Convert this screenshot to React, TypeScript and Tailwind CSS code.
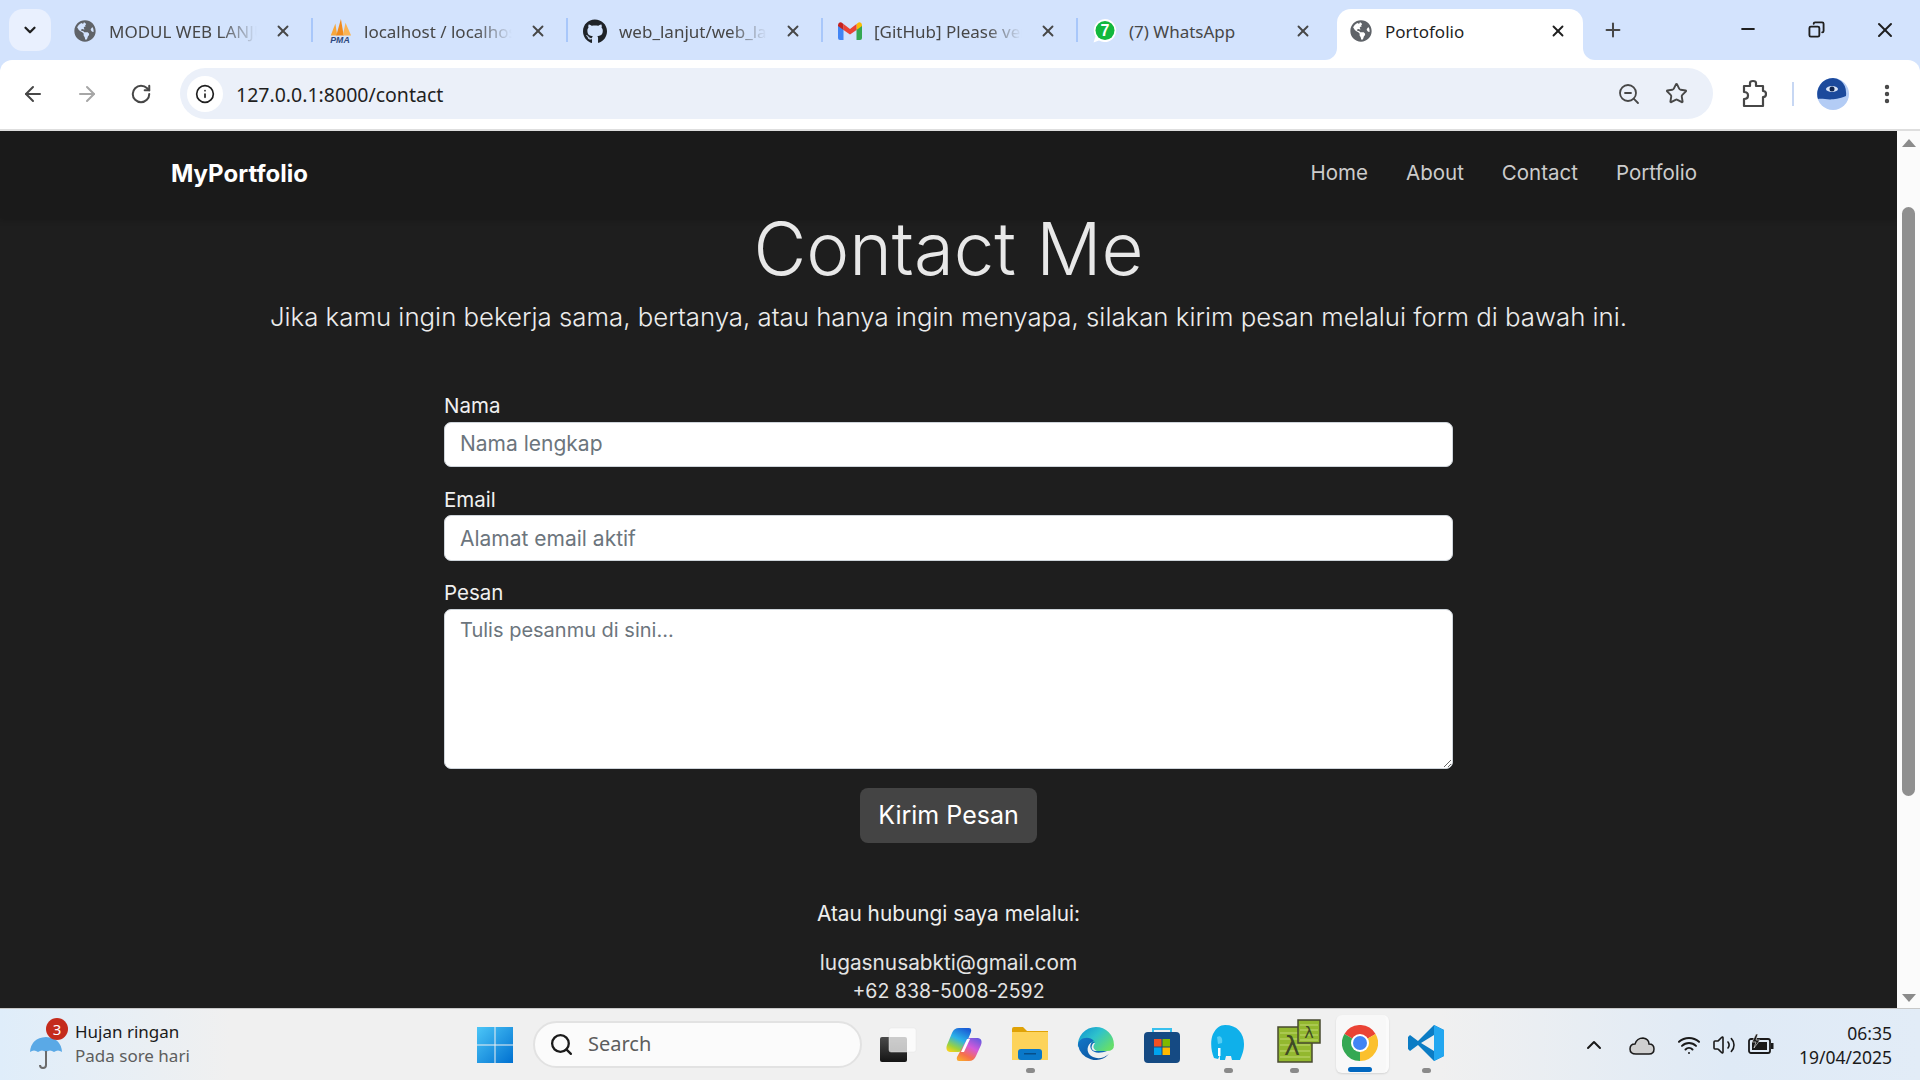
import { ArrowLeft, ArrowRight, ChevronDown, ChevronUp, Copy, Info, Minus, MoreVertical, Plus, RotateCw, Search, Star, Volume2, Wifi, X, ZoomOut } from "lucide-react";
import { FaGithub, FaGlobeAmericas } from "react-icons/fa";

const uiFont = "font-['Noto_Sans',sans-serif]";

function PmaIcon() {
    return (
        <svg width="26" height="26" viewBox="0 0 26 26">
            <path d="M3 18 L8 5 L10 18 Z" fill="#f7a73c" />
            <path d="M9 18 L14 0 L17 18 Z" fill="#f08a1d" />
            <path d="M16 18 L19 4 L25 18 Z" fill="#fbb454" />
            <text x="13" y="25.5" textAnchor="middle" fontSize="9.5" fontWeight="700" fontStyle="italic" fill="#2f4a80" fontFamily="Liberation Sans">PMA</text>
        </svg>
    );
}

function GmailIcon() {
    return (
        <svg width="24" height="18" viewBox="0 0 24 18">
            <path d="M0 3 L0 16 Q0 18 2 18 L5.5 18 L5.5 7 Z" fill="#4285f4" />
            <path d="M18.5 7 L18.5 18 L22 18 Q24 18 24 16 L24 3 Z" fill="#34a853" />
            <path d="M18.5 2 L18.5 8 L24 4 L24 3 Q23.5 -0.5 20.5 0.5 Z" fill="#fbbc04" />
            <path d="M5.5 8 L5.5 2 L12 7 L18.5 2 L18.5 8 L12 12.5 Z" fill="#ea4335" />
            <path d="M0 4 L0 3 Q0.5 -0.5 3.5 0.5 L5.5 2 L5.5 8 Z" fill="#c5221f" />
        </svg>
    );
}

function WhatsappIcon() {
    return (
        <svg width="24" height="26" viewBox="0 0 24 26">
            <path d="M12 1 A11.5 11.5 0 1 1 6 22.5 L0.5 24.5 L2.5 18.5 A11.5 11.5 0 0 1 12 1 Z" fill="#ffffff" />
            <circle cx="12" cy="12.5" r="9.5" fill="#12b83d" />
            <text x="12" y="18" textAnchor="middle" fontSize="16" fontWeight="700" fill="#ffffff" fontFamily="Liberation Sans">7</text>
        </svg>
    );
}

function Tab({ icon, title, active, fade, separator }: { icon: React.ReactNode; title: string; active?: boolean; fade?: boolean; separator?: boolean }) {
    return (
        <div className={`relative h-[51px] mt-[9px] flex items-center shrink-0 ${active ? "w-[246px] pl-[12px] bg-white rounded-t-[14px]" : separator ? "w-[255px] pl-[15px]" : "w-[259px] pl-[15px]"}`}>
            <span className="w-[24px] h-[26px] flex items-center justify-center shrink-0 mb-[7px]">{icon}</span>
            <span className={`ml-[12px] w-[148px] shrink-0 whitespace-nowrap overflow-hidden text-[17px] leading-[24px] mb-[5px] ${active ? "text-[#1f1f1f]" : "text-[#474747]"} ${fade ? "[mask-image:linear-gradient(to_right,black_75%,transparent)]" : ""}`}>{title}</span>
            <X size={18} strokeWidth={2.5} className={`shrink-0 mb-[7px] ${active ? "ml-[16px] text-[#1f1f1f]" : "ml-[17px] text-[#474747]"}`} />
            {separator && <span className="absolute right-0 top-[9px] w-[2px] h-[24px] bg-[#a8c7fa]"></span>}
            {active && (
                <>
                    <span className="absolute -left-[12px] bottom-0 w-[12px] h-[12px] bg-white"><span className="block w-full h-full bg-[#d3e3fd] rounded-br-[12px]"></span></span>
                    <span className="absolute -right-[12px] bottom-0 w-[12px] h-[12px] bg-white"><span className="block w-full h-full bg-[#d3e3fd] rounded-bl-[12px]"></span></span>
                </>
            )}
        </div>
    );
}

function TasksIcon() {
    return (
        <svg width="38" height="36" viewBox="0 0 38 36">
            <defs>
                <linearGradient id="tv" x1="0" y1="0" x2="0" y2="1"><stop offset="0" stopColor="#4a4a4a" /><stop offset="1" stopColor="#141414" /></linearGradient>
            </defs>
            <rect x="1" y="10" width="27" height="25" rx="2" fill="url(#tv)" />
            <rect x="10" y="1" width="27" height="24" rx="2" fill="#ffffff" fillOpacity="0.72" stroke="#e4e4e4" strokeWidth="0.5" />
        </svg>
    );
}

function CopilotIcon() {
    return (
        <svg width="36" height="36" viewBox="0 0 36 36">
            <defs>
                <linearGradient id="cp1" x1="0.7" y1="0" x2="0.2" y2="1"><stop offset="0" stopColor="#1b5fd6" /><stop offset="0.45" stopColor="#2bb3e8" /><stop offset="0.8" stopColor="#9ed23c" /><stop offset="1" stopColor="#f4d21f" /></linearGradient>
                <linearGradient id="cp2" x1="0.8" y1="0" x2="0.2" y2="1"><stop offset="0" stopColor="#6a5ae0" /><stop offset="0.4" stopColor="#d55ad8" /><stop offset="0.75" stopColor="#f66f4c" /><stop offset="1" stopColor="#f9a52e" /></linearGradient>
            </defs>
            <path d="M13 1 L23 1 Q26 1 25 5 L18 22 Q16 25 12 25 L4 25 Q-1 24 1 18 L6 6 Q8 1 13 1 Z" fill="url(#cp1)" />
            <path d="M20 14 Q21 11 25 11 L32 11 Q37 12 35 18 L30 29 Q28 34 23 34 L13 34 Q10 34 11 30 Z" fill="url(#cp2)" />
            <path d="M21 12 L24 12 L18 25 L15 25 Z" fill="#ffffff" />
        </svg>
    );
}

function ExplorerIcon() {
    return (
        <svg width="36" height="34" viewBox="0 0 36 34" className="mt-[2px]">
            <path d="M0 2 Q0 0 2 0 L11 0 L15 4 L36 4 L36 10 L0 10 Z" fill="#e0a206" />
            <path d="M0 5 L36 5 L36 33 L0 33 Z" fill="#fdd35a" />
            <rect x="6" y="22" width="24" height="11" fill="#0a78c9" rx="3" />
            <rect x="12" y="26" width="12" height="1.5" fill="#064f8a" />
        </svg>
    );
}

function EdgeIcon() {
    return (
        <svg width="38" height="38" viewBox="0 0 38 38">
            <defs>
                <linearGradient id="ed1" x1="0" y1="0" x2="1" y2="0.7"><stop offset="0" stopColor="#0f8fd0" /><stop offset="0.5" stopColor="#2ec2cc" /><stop offset="1" stopColor="#66de6a" /></linearGradient>
                <linearGradient id="ed2" x1="0" y1="0" x2="1" y2="1"><stop offset="0" stopColor="#1477c8" /><stop offset="1" stopColor="#0b4f98" /></linearGradient>
            </defs>
            <path d="M19 1 A18 18 0 0 1 37 19 Q37 25 30 25 L20 25 Q14 22 18 17 Q9 16 1 21 A18 18 0 0 1 19 1 Z" fill="url(#ed1)" />
            <path d="M1 19 C1 12 12 9 17 15 C11 17 9 23 12 28 C16 33 25 34 32 28 A18 18 0 0 1 1 19 Z" fill="url(#ed2)" />
            <path d="M18 16 C14 18 13 24 18 25 L30 25 C24 27 17 28 14 23 C12 19 15 15 18 16 Z" fill="#0e6ab8" />
        </svg>
    );
}

function StoreIcon() {
    return (
        <svg width="36" height="36" viewBox="0 0 36 36">
            <path d="M9 8 L9 2 L27 2 L27 8" fill="none" stroke="#38c0ee" strokeWidth="2" />
            <rect x="0" y="5" width="36" height="31" rx="4" fill="#154a83" />
            <rect x="10" y="12" width="7.5" height="7.5" fill="#f25022" />
            <rect x="18.5" y="12" width="7.5" height="7.5" fill="#7fba00" />
            <rect x="10" y="20.5" width="7.5" height="7.5" fill="#00a4ef" />
            <rect x="18.5" y="20.5" width="7.5" height="7.5" fill="#ffb900" />
        </svg>
    );
}

function ElephantIcon() {
    return (
        <svg width="34" height="36" viewBox="0 0 34 36">
            <path d="M14 0 C26 0 33 8 33 19 C33 26 31 30 29 35 L21 35 L20 31 L15 31 L14 35 L9 35 L9 30 L7 34 L3 33 C0 26 -1 16 2 9 C5 3 9 0 14 0 Z" fill="#0fb0ea" />
            <path d="M6 12 C9 10 12 12 11 18 L7 19 Z" fill="#57cdf3" />
            <path d="M7 23 L9.5 23 L9.5 31 L7 31 Z" fill="#ffffff" />
        </svg>
    );
}

function LambdaIcon() {
    return (
        <svg width="44" height="44" viewBox="0 0 44 44" className="ml-[10px] mb-[4px]">
            <rect x="1" y="8" width="34" height="35" fill="#93b82f" stroke="#47492f" strokeWidth="1.5" />
            <path d="M3 14 H33 M3 20 H33 M3 26 H33 M3 32 H33 M3 38 H33" stroke="#c0d873" strokeWidth="1" />
            <rect x="21" y="1" width="22" height="23" fill="#93b82f" stroke="#47492f" strokeWidth="1.5" />
            <path d="M23 6 H41 M23 11 H41 M23 16 H41 M23 21 H41" stroke="#c0d873" strokeWidth="1" />
            <text x="15" y="36" textAnchor="middle" fontSize="27" fill="#3f4a26" fontFamily="DejaVu Sans">λ</text>
            <text x="32" y="19" textAnchor="middle" fontSize="16" fill="#3f4a26" fontFamily="DejaVu Sans">λ</text>
        </svg>
    );
}

function ChromeIcon() {
    return (
        <svg width="36" height="36" viewBox="0 0 36 36">
            <path d="M18 18 L2.4 9 A18 18 0 0 1 33.6 9 Z" fill="#ea4335" />
            <path d="M18 18 L33.6 9 A18 18 0 0 1 18 36 Z" fill="#fbc02d" />
            <path d="M18 18 L18 36 A18 18 0 0 1 2.4 9 Z" fill="#34a853" />
            <circle cx="18" cy="18" r="9" fill="#ffffff" />
            <circle cx="18" cy="18" r="7" fill="#4285f4" />
        </svg>
    );
}

function VscodeIcon() {
    return (
        <svg width="36" height="36" viewBox="0 0 36 36">
            <path d="M26 0 L36 5 L36 31 L26 36 L10 20 L2 26 L0 24 L0 12 L2 10 L10 16 Z" fill="#0b7cc4" />
            <path d="M26 10 L13 18 L26 26 Z" fill="#f0f0f0" />
            <path d="M26 0 L36 5 L36 31 L26 36 Z" fill="#23a7f0" />
        </svg>
    );
}

function TaskIcon({ children, dot, active }: { children: React.ReactNode; dot?: boolean; active?: boolean }) {
    return (
        <div className={`relative w-[66px] h-[71px] flex items-center justify-center shrink-0 ${dot || active ? "pb-[3px]" : ""}`}>
            {active && <span className="absolute left-[9px] top-[6px] w-[53px] h-[58px] bg-[#f8f8f8] rounded-[6px] border-r-[3px] border-[#fbfbfb] shadow-[0_1px_2px_rgba(0,0,0,0.12)]"></span>}
            <span className="relative flex items-center justify-center">{children}</span>
            {dot && <span className="absolute bottom-[7px] left-[29px] w-[9px] h-[5px] rounded-full bg-[#8a8a8a]"></span>}
            {active && <span className="absolute bottom-[8px] left-[21px] w-[24px] h-[5px] rounded-full bg-[#0067c0]"></span>}
        </div>
    );
}

function App() {
    return (
        <div className={`w-[1920px] h-[1080px] flex flex-col overflow-hidden bg-[#d3e3fd] ${uiFont}`}>
            {/* --------------------------- Tabs --------------------------- */}
            <div className="h-[60px] flex shrink-0">
                <div className="ml-[9px] mt-[9px] w-[42px] h-[42px] rounded-[14px] bg-[#e9f0fe] flex items-center justify-center mr-[7px] shrink-0">
                    <ChevronDown size={18} strokeWidth={3} className="text-[#1f1f1f]" />
                </div>
                <Tab icon={<FaGlobeAmericas size={22} className="text-[#5f6368]" />} title="MODUL WEB LANJUT" fade separator />
                <Tab icon={<PmaIcon />} title="localhost / localhost" fade separator />
                <Tab icon={<FaGithub size={25} className="text-[#1f2328]" />} title="web_lanjut/web_lanjut" fade separator />
                <Tab icon={<GmailIcon />} title="[GitHub] Please verify" fade separator />
                <Tab icon={<WhatsappIcon />} title="(7) WhatsApp" />
                <Tab icon={<FaGlobeAmericas size={22} className="text-[#5f6368]" />} title="Portofolio" active />
                <Plus size={22} strokeWidth={2.2} className="ml-[19px] mt-[19px] text-[#474747] shrink-0" />
                <Minus size={20} strokeWidth={2.5} className="ml-[114px] mt-[19px] text-[#1f1f1f] shrink-0" />
                <Copy size={17} strokeWidth={2.6} className="ml-[50px] mt-[21px] text-[#1f1f1f] -scale-x-100 shrink-0" />
                <X size={24} strokeWidth={2} className="ml-[48px] mt-[18px] text-[#1f1f1f] shrink-0" />
            </div>

            {/* --------------------------- Toolbar --------------------------- */}
            <div className="h-[71px] bg-white rounded-t-[12px] border-b-2 border-[#dedede] flex items-center shrink-0 pb-[2px]">
                <ArrowLeft size={24} strokeWidth={2} className="ml-[21px] text-[#474747]" />
                <ArrowRight size={24} strokeWidth={2} className="ml-[30px] text-[#a6a6a6]" />
                <RotateCw size={22} strokeWidth={2.2} className="ml-[31px] text-[#474747]" />
                <div className="ml-[28px] w-[1533px] h-[51px] rounded-full bg-[#ebf0f9] flex items-center pl-[7px] pr-[25px]">
                    <span className="w-[36px] h-[36px] rounded-full bg-white flex items-center justify-center">
                        <Info size={20} strokeWidth={2} className="text-[#1f1f1f]" />
                    </span>
                    <span className="ml-[13px] mt-[3px] text-[19.5px] text-[#1f1f1f]">127.0.0.1:8000/contact</span>
                    <ZoomOut size={24} strokeWidth={1.8} className="ml-auto text-[#474747]" />
                    <Star size={23} strokeWidth={2} className="ml-[24px] text-[#474747]" />
                </div>
                <svg width="26" height="30" viewBox="0 0 26 30" className="ml-[28px]">
                    <path d="M3 7 L9 7 L9 4 Q9 2 12 2 Q15 2 15 4 L15 7 L22 7 L22 12 Q25 12 25 15 Q25 18 22 18 L22 27 L3 27 L3 20 Q7 20 7 16.5 Q7 13 3 13 Z" fill="none" stroke="#474747" strokeWidth="2.2" strokeLinejoin="round" />
                </svg>
                <span className="ml-[25px] w-[2px] h-[24px] bg-[#c7d7f3]"></span>
                <svg width="32" height="32" viewBox="0 0 32 32" className="ml-[23px]">
                    <circle cx="16" cy="16" r="16" fill="#b3ccf5" />
                    <path d="M16 0 A16 16 0 0 0 1 21 C8 20 14 24 29 18 Q30 8 24 3 Q20 0 16 0 Z" fill="#1c4a9c" />
                    <ellipse cx="15" cy="11" rx="6" ry="3" fill="#d8e4f8" />
                    <circle cx="15" cy="11" r="2.5" fill="#10254f" />
                </svg>
                <MoreVertical size={24} strokeWidth={2.4} className="ml-[26px] text-[#474747]" />
            </div>

            {/* --------------------------- Page --------------------------- */}
            <div className="flex-1 min-h-0 flex">
                <div className="w-[1897px] bg-[#1e1e1e] overflow-hidden font-['Inter',sans-serif]">
                    <nav className="h-[87px] bg-[#1a1a1a] flex items-center pl-[171px] pr-[200px] shadow-[0_2px_6px_rgba(0,0,0,0.2)]">
                        <span className="text-[24px] font-bold text-white mb-[1px]">MyPortfolio</span>
                        <div className="ml-auto flex gap-[38px] text-[20.5px] text-[#cccccc] mb-[2px]">
                            <a>Home</a>
                            <a>About</a>
                            <a>Contact</a>
                            <a>Portfolio</a>
                        </div>
                    </nav>

                    <section className="flex flex-col items-center">
                        <h1 className="h-[62px] text-[72.5px] leading-[62px] font-light text-[#e8e8e8]">Contact Me</h1>
                        <p className="mt-[18px] text-[25.8px] leading-[38px] font-light text-[#ececec]">Jika kamu ingin bekerja sama, bertanya, atau hanya ingin menyapa, silakan kirim pesan melalui form di bawah ini.</p>

                        <form className="mt-[57px] w-[1009px] flex flex-col">
                            {/* --------------------------- Nama --------------------------- */}
                            <label htmlFor="nama" className="text-[20.5px] leading-[26px] text-[#f0f0f0]">Nama</label>
                            <input id="nama" type="text" placeholder="Nama lengkap" className="mt-[3px] h-[45px] px-[15px] pb-[2px] rounded-[7px] border border-[#ced4da] bg-white text-[21px] outline-none placeholder:text-[#6c757d]" />

                            {/* --------------------------- Email --------------------------- */}
                            <label htmlFor="email" className="mt-[20px] text-[20.5px] leading-[26px] text-[#f0f0f0]">Email</label>
                            <input id="email" type="email" placeholder="Alamat email aktif" className="mt-[2px] h-[46px] px-[15px] rounded-[7px] border border-[#ced4da] bg-white text-[21px] outline-none placeholder:text-[#6c757d]" />

                            {/* --------------------------- Pesan --------------------------- */}
                            <label htmlFor="pesan" className="mt-[19px] text-[20.5px] leading-[26px] text-[#f0f0f0]">Pesan</label>
                            <textarea id="pesan" placeholder="Tulis pesanmu di sini..." className="mt-[3px] h-[160px] px-[15px] py-[5px] rounded-[7px] border border-[#ced4da] bg-white text-[20px] leading-[30px] outline-none placeholder:text-[#6c757d]"></textarea>

                            <button type="button" className="mt-[19px] self-center w-[177px] h-[55px] rounded-[8px] bg-[#444444] text-white text-[25px]">Kirim Pesan</button>
                        </form>

                        <p className="mt-[58px] text-[20.8px] leading-[26px] text-[#eeeeee]">Atau hubungi saya melalui:</p>
                        <p className="mt-[22px] text-[20.8px] leading-[28px] text-[#e4e4e4]">lugasnusabkti@gmail.com</p>
                        <p className="text-[19.5px] leading-[28px] text-[#e4e4e4]">+62 838-5008-2592</p>
                    </section>
                </div>

                {/* --------------------------- Scrollbar --------------------------- */}
                <div className="w-[23px] bg-[#fbfbfb] flex flex-col items-center">
                    <span className="mt-[8px] w-0 h-0 border-x-[7px] border-x-transparent border-b-[8px] border-b-[#8b8b8b]"></span>
                    <span className="mt-[60px] w-[13px] h-[589px] rounded-full bg-[#8f8f8f]"></span>
                    <span className="mt-auto mb-[6px] w-0 h-0 border-x-[7px] border-x-transparent border-t-[8px] border-t-[#8b8b8b]"></span>
                </div>
            </div>

            {/* --------------------------- Taskbar --------------------------- */}
            <div className="h-[72px] shrink-0 border-t border-[#c8c8c8] bg-[linear-gradient(to_right,#dfedfa_0%,#f0f0f0_12%,#f0f0f0_75%,#dfeaf6_90%,#e2ecf7_100%)] flex items-center">
                <div className="relative w-[477px] h-full pl-[75px] pb-[2px] flex flex-col justify-center shrink-0">
                    <svg width="36" height="36" viewBox="0 0 36 36" className="absolute left-[28px] top-[24px]">
                        <path d="M2 19 Q3 5 18 4 Q33 5 34 19 Q30 16 26 19 Q22 16 18 19 Q14 16 10 19 Q6 16 2 19 Z" fill="#5aa9e6" />
                        <path d="M18 18 L18 32 Q18 35 15 35 Q12 35 12 32" fill="none" stroke="#6b6b6b" strokeWidth="2" />
                    </svg>
                    <span className="absolute left-[46px] top-[9px] w-[22px] h-[22px] rounded-full bg-[#c42b1c] text-white text-[15px] leading-[22px] text-center">3</span>
                    <span className="text-[17px] leading-[24px] text-[#1a1a1a]">Hujan ringan</span>
                    <span className="text-[17px] leading-[24px] text-[#5d5d5d]">Pada sore hari</span>
                </div>
                <svg width="36" height="36" viewBox="0 0 36 36" className="shrink-0">
                    <defs>
                        <linearGradient id="win" x1="0" y1="0" x2="1" y2="1"><stop offset="0" stopColor="#4cc6f7" /><stop offset="1" stopColor="#0070d0" /></linearGradient>
                    </defs>
                    <path d="M0 0 H17.5 V17.5 H0 Z M18.5 0 H36 V17.5 H18.5 Z M0 18.5 H17.5 V36 H0 Z M18.5 18.5 H36 V36 H18.5 Z" fill="url(#win)" />
                </svg>
                <div className="ml-[20px] w-[329px] h-[47px] mb-[1px] rounded-full bg-[#fbfbfb] border-2 border-[#e2e2e2] flex items-center pl-[14px] shrink-0">
                    <Search size={25} strokeWidth={2.2} className="text-[#1a1a1a]" />
                    <span className="ml-[14px] text-[20px] text-[#5d5d5d]">Search</span>
                </div>
                <div className="ml-[3px] flex items-center">
                    <TaskIcon><TasksIcon /></TaskIcon>
                    <TaskIcon><CopilotIcon /></TaskIcon>
                    <TaskIcon dot><ExplorerIcon /></TaskIcon>
                    <TaskIcon><EdgeIcon /></TaskIcon>
                    <TaskIcon><StoreIcon /></TaskIcon>
                    <TaskIcon dot><ElephantIcon /></TaskIcon>
                    <TaskIcon dot><LambdaIcon /></TaskIcon>
                    <TaskIcon active><ChromeIcon /></TaskIcon>
                    <TaskIcon dot><VscodeIcon /></TaskIcon>
                </div>
                <ChevronUp size={24} strokeWidth={2} className="ml-[123px] text-[#1a1a1a] shrink-0" />
                <svg width="26" height="20" viewBox="0 0 26 20" className="ml-[23px] shrink-0">
                    <path d="M7 19 Q1 19 1 14 Q1 9 6 9 Q8 3 14 3 Q20 4 20 9 Q25 9 25 14 Q25 19 20 19 Z" fill="#cfcfcf" stroke="#1a1a1a" strokeWidth="1.5" />
                </svg>
                <Wifi size={24} strokeWidth={2} className="ml-[22px] text-[#1a1a1a] shrink-0" />
                <Volume2 size={24} strokeWidth={1.6} className="ml-[11px] text-[#1a1a1a] shrink-0" />
                <svg width="26" height="22" viewBox="0 0 26 22" className="ml-[12px] shrink-0">
                    <rect x="1" y="5" width="21" height="14" rx="2" fill="none" stroke="#1a1a1a" strokeWidth="1.8" />
                    <rect x="4" y="8" width="15" height="8" fill="#1a1a1a" />
                    <rect x="23" y="9" width="2.5" height="6" fill="#1a1a1a" />
                    <path d="M8 0 L4 8 L8 8 L6 14 L12 6 L8 6 L10 0 Z" fill="#1a1a1a" stroke="#f0f0f0" strokeWidth="0.6" />
                </svg>
                <div className="ml-auto mr-[28px] flex flex-col items-end text-[17.5px] leading-[24px] text-[#1a1a1a]">
                    <span>06:35</span>
                    <span>19/04/2025</span>
                </div>
            </div>
        </div>
    );
}

export default App;
